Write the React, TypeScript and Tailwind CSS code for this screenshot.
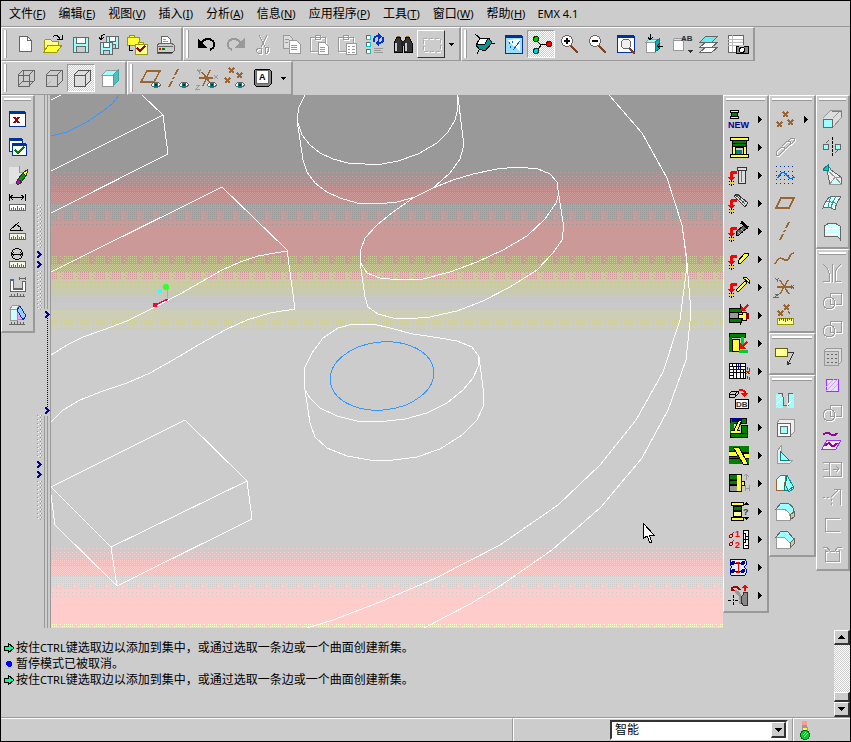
import type { ReactNode } from 'react';

const CY = '#99ffff';
const NV = '#003399';
const BR = '#996633';
const GR = '#999999';
const DK = '#666666';
const GN = '#008000';
const YE = '#ffff33';

const p = (d: string, stroke = '#000', fill = 'none', w = 1) => (
  <path d={d} stroke={stroke} fill={fill} strokeWidth={w} />
);
const r = (x: number, y: number, w: number, h: number, fill: string, stroke = 'none') => (
  <rect x={x} y={y} width={w} height={h} fill={fill} stroke={stroke} />
);
const emboss = (d: string) => (
  <>
    <path d={d} stroke="#fff" transform="translate(1 1)" />
    <path d={d} stroke={GR} />
  </>
);
const txt = (x: number, y: number, size: number, s: string, fill = '#000') => (
  <text x={x} y={y} fontSize={size} fontWeight="bold" fill={fill} fontFamily="Liberation Sans, sans-serif">{s}</text>
);
const eye = (
  <>
    {p('M12 19Q17 13 22 19Q17 24 12 19z', DK, '#fff')}
    {r(15, 17, 4, 4, '#008080')}
    {r(16, 18, 2, 2, '#003333')}
  </>
);
const cross = (x: number, y: number, c = BR) => p(`M${x - 2} ${y - 2}l5 5M${x + 3} ${y - 2}l-5 5`, c, 'none', 1.5);
const floppy = (x: number, y: number, s: number) => (
  <>
    {r(x, y, s, s, CY, DK)}
    {r(x + 3, y, s - 6, s / 2 - 1, '#fff', DK)}
    {r(x + 3, y + s / 2 + 2, s - 6, s / 2 - 2, '#ccc', DK)}
  </>
);
const place = (
  <>
    {p('M10 9H7Q4 9 4 12V15', '#f00', 'none', 3)}
    {p('M1 14h7l-3.500 4z', 'none', '#f00')}
    {p('M2 18l5 4M7 18l-5 4M4.500 17v6', '#000')}
    {r(3, 19, 3, 2, '#ffcc00')}
  </>
);
const ruler = (y: number, fill = '#fff') => (
  <>
    {r(4, y, 16, 6, fill, DK)}
    {p(`M6 ${y + 6}v-2M8 ${y + 6}v-3M10 ${y + 6}v-2M12 ${y + 6}v-4M14 ${y + 6}v-2M16 ${y + 6}v-3M18 ${y + 6}v-2`, DK)}
  </>
);
const cube = 'M5 9h11v11H5zM5 9l5-5h11v11l-5 5M16 9l5-5';
const lens = (
  <>
    {p('M14 14l7 7', '#804020', 'none', 2)}
    <circle cx="10" cy="9" r="5.500" fill="#fff" stroke={DK} />
  </>
);
const shapes = (
  <>
    {emboss('M10 4h11v11h-11z')}
    {emboss('M3 14a6 6 0 1 0 12 0a6 6 0 1 0 -12 0')}
  </>
);

const ic: Record<string, ReactNode> = {
  create: <>{p('M6 4h8l4 4v11H6z', DK, '#fff')}{p('M14 4v4h4', DK)}</>,
  open: (
    <>
      {p('M3 20V9l2-2h4l2 2h6v4', '#999900', '#ffff99')}
      {p('M3 20l4-7h14l-5 7z', '#999900', YE)}
      {p('M12 5q4-4 7 2M16 7h5V3')}
    </>
  ),
  save: floppy(4, 5, 15),
  saveCopy: <>{floppy(9, 4, 12)}{floppy(3, 10, 12)}{p('M8 3q-4-1-4 4M2 5l2 3l3-3')}</>,
  backup: (
    <>
      {r(2, 5, 12, 8, YE, '#999900')}{p('M4 5V3h5v2', '#999900', YE)}
      {p('M4 13v5h4')}
      {r(10, 12, 12, 10, '#ffff99', '#999900')}{p('M13 12v-2h5v2', '#999900', YE)}
      {p('M12 16l3 3l5-5', '#990000', 'none', 2)}
    </>
  ),
  print: (
    <>
      {p('M8 12V4h6l3 3v5z', DK, '#fff')}{p('M10 7h3M10 9h5M10 11h5', GR)}
      {p('M4 13l3-2h11l3 2v6l-2 2H4z', DK, '#ccc')}{p('M4 14h16', DK)}
      {r(6, 16, 2, 2, '#f00')}{r(9, 16, 3, 2, GN)}{p('M5 20h15', '#333')}
    </>
  ),
  undo: <>{p('M6 11q6-7 12-2q4 5-3 9', '#000', 'none', 2)}{p('M3 7v8h8z', '#000', '#000')}</>,
  redo: <>{p('M18 11q-6-7-12-2q-4 5 3 9', GR, 'none', 2)}{p('M21 7v8h-8z', GR, GR)}</>,
  cut: <>{emboss('M8 3l6 12M16 3l-6 12M7 16h3v5H7l-2-2zM14 15h3l1 3l-2 3h-2z')}</>,
  copy: <>{p('M4 3h6l3 3v10H4z', GR, '#ddd')}{p('M10 8h7l4 4v9H10z', GR, '#fff')}{p('M6 7h4M6 10h3M12 13h6M12 15h6M12 17h6', GR)}</>,
  paste: <>{emboss('M3 5h15v14H3zM8 5V3h5v4H8z')}{p('M11 10h6l4 4v8H11z', GR, '#fff')}{p('M13 15h5M13 17h5M13 19h5', GR)}</>,
  special: <>{emboss('M3 5h15v14H3zM8 5V3h5v4H8z')}{r(11, 11, 10, 11, '#fff', GR)}{p('M13 14h2M17 14h3M13 17h2M17 17h3M13 20h2M17 20h3', GR, 'none', 1)}</>,
  regen: (
    <>
      {[3, 10, 17].map((y) => <g key={y}>{r(3, y, 4, 4, '#fff', DK)}{p(`M7 ${y}v4h-4`, '#00cccc')}</g>)}
      {p('M11 10q-1-6 5-6M20 5q2 6-5 6', '#0033cc', 'none', 2)}
      {p('M15 1l4 3l-4 4zM16 8l-4 3l4 3z', 'none', '#0033cc')}
      {p('M11 16h9M11 18h7M11 20h9', GR)}
    </>
  ),
  find: (
    <>
      {p('M6 5h3l2 6v9H3v-9zM15 5h3l3 6v9h-8v-9z', '#000', '#333')}{r(10, 9, 4, 5, '#222')}
      {p('M5 11v8M15 11v8', '#ccc', 'none', 2)}{p('M6 4h3M15 4h3', '#996600')}
    </>
  ),
  select: <><path d="M4 6h17v13H4z" stroke="#fff" strokeDasharray="4 2" transform="translate(1 1)" /><path d="M4 6h17v13H4z" stroke="#aaa" strokeDasharray="4 2" /></>,
  spin: (
    <>
      {p('M2 2l6 5M15 11h7M7 16l-3 6')}
      {p('M3 13l4-7h9l3 5l-7 8l-6-2z', '#000', '#009999')}{p('M4 12l3-6h8l-3 6z', '#000', '#fff')}
    </>
  ),
  repaint: (
    <>
      {r(4, 4, 17, 17, '#99ddff', NV)}{r(4, 3, 17, 3, NV)}{p('M6 8l13 11V7z', 'none', '#fff')}
      {p('M12 18l7-9M8 10v2M11 9v2M9 14v2', '#0066cc')}
    </>
  ),
  center: (
    <>
      {p('M7 8l5 5l-4 6M12 12h8')}
      <circle cx="7" cy="7" r="2.500" fill="#00cc00" stroke="#030" /><circle cx="20" cy="12" r="2.500" fill="red" stroke="#600" />
      <circle cx="7" cy="19" r="2.500" fill="#00cccc" stroke="#033" />
    </>
  ),
  zoomIn: <>{lens}{p('M7 9h6M10 6v6', '#000', 'none', 2)}</>,
  zoomOut: <>{lens}{p('M7 9h6', '#000', 'none', 2)}</>,
  refit: (
    <>
      {r(4, 4, 17, 16, '#fff', NV)}{r(4, 3, 17, 3, NV)}{p('M16 16l6 6', '#804020', 'none', 2)}
      <circle cx="13" cy="12" r="5" fill="#eee" stroke={DK} />
    </>
  ),
  orient: (
    <>
      {p('M5 10l3-3h10l-3 3z', GR, CY)}{r(5, 10, 9, 10, '#fff', GR)}{p('M14 10l4-3v10l-4 3z', '#008080', '#00b3b3')}
      {p('M9 2v6M7 5l2 3l3-3M22 14h-6M19 11l-3 3l3 3')}
    </>
  ),
  views: <>{p('M4 8l2-2h9v3', GR, CY)}{r(4, 8, 10, 10, '#fff', GR)}{txt(12, 9, 8, 'AB', '#333')}{p('M18 18h6l-3 3z', 'none', '#333')}</>,
  layers: (
    <>
      {p('M3 20l6-5h12l-6 5z', DK, '#fff')}{p('M3 15l6-5h12l-6 5z', DK, '#fff')}{p('M3 10l6-6h12l-6 6z', DK, '#66eeee')}
    </>
  ),
  viewMgr: (
    <>
      {r(3, 3, 15, 17, '#fff', DK)}{p('M3 7h15M3 10h15M3 13h15M7 3v17', '#bbb')}
      {r(11, 14, 12, 7, '#888', '#000')}{r(14, 13, 5, 2, '#ccc')}<circle cx="17" cy="18" r="2.500" fill="#fff" stroke="#000" />
    </>
  ),
  wire: <>{p(cube, DK)}{p('M5 20l5-5h11M10 15V4', DK)}</>,
  hidden: <>{p(cube, DK)}{p('M6 19l4-4', '#aaa')}</>,
  noHidden: p(cube, '#555', '#ddd'),
  shaded: <>{p('M5 9l5-5h11l-5 5z', GR, CY)}{r(5, 9, 11, 11, '#fff', GR)}{p('M16 9l5-5v11l-5 5z', '#33aaaa', '#55bbbb')}</>,
  planeEye: <>{p('M2 16L8 5h13l-6 11z', BR, 'none', 1.5)}{eye}</>,
  axisEye: <>{p('M11 3l-3 6M7 11l-1 2M5 15l-3 6', BR, 'none', 1.5)}{eye}</>,
  csysEye: <>{p('M4 12h14M7 6l9 12M15 4L8 20', BR, 'none', 1.5)}{p('M2 3l2 3l2-3M4 6v2M1 19h4l-4 4h4M19 9l4 4M23 9l-4 4', GR)}{eye}</>,
  pointEye: <>{cross(8, 4)}{cross(4, 14)}{cross(16, 9)}{eye}</>,
  annot: <>{p('M5 3h13l2 2v13l-2 2H5l-2-2V5z', '#000', '#888')}{r(5, 4, 12, 13, '#fff', DK)}{txt(8, 14, 9, 'A')}</>,
  close: <>{r(4, 5, 16, 14, '#fff', NV)}{r(4, 4, 16, 3, NV)}{p('M9 10l5 6M14 10l-5 6', '#990000', 'none', 2)}</>,
  activate: (
    <>
      {r(4, 4, 13, 12, '#fff', NV)}{r(4, 3, 13, 3, NV)}{r(7, 9, 14, 11, '#fff', NV)}{r(7, 8, 14, 3, NV)}
      {p('M10 15l3 3l6-6', GN, 'none', 2)}
    </>
  ),
  erase: (
    <>
      {p('M3 3h11l6 6v3l-8 7l-4 2H3z', '#ccc', '#e2e2e2')}{p('M14 3v6h6', GR, '#ccc')}
      {p('M13 16l5-6l3 3l-5 6z', '#333', '#009900')}{p('M13 16l-2 4l2 2l4-3z', '#333', '#cc00cc')}{p('M18 10l4-3v3l-1 3z', '#333', YE)}
    </>
  ),
  dist: <>{p('M4 3v7M20 3v7M5 6h14M8 4L5 6l3 3M16 4l3 2l-3 3')}{ruler(13)}</>,
  angle: <>{p('M5 11L14 3M5 11h13M12 6q4 2 4 5')}{ruler(14, '#f5f5e5')}</>,
  diam: <><circle cx="12" cy="7" r="5.500" stroke="#000" />{p('M7 7h10M9 5L7 7l2 2M15 5l2 2l-2 2')}{ruler(14, '#f5f5e5')}</>,
  area: <>{p('M5 5h3v9h9V6h3v10H5z', '#3366cc', '#fff')}{p('M5 16V4h3v9h9V6h3', DK)}{p('M14 2v3M20 2v3M15 3h5M4 21h16M6 19v2M9 19v2M12 18v3M15 19v2M18 19v2', DK)}</>,
  section: (
    <>
      {p('M5 6l3-4h7l-3 4z', GR, '#eee')}{r(5, 6, 7, 11, '#ccffff', GR)}
      {p('M12 17V8l3-5l4 13z', GR, '#ff99ff')}{p('M12 7l3-4l6 10l-3 4z', NV, '#99ccff')}
      {p('M4 21h16M6 19v2M9 19v2M12 18v3M15 19v2M18 19v2', DK)}
    </>
  ),
  newMold: <>{r(3, 3, 8, 2, YE, '#000')}{r(4, 5, 6, 4, GN, '#000')}{r(3, 9, 8, 2, YE, '#000')}{txt(1, 21, 9, 'NEW', '#000099')}</>,
  mold: (
    <>
      {r(3, 2, 18, 3, YE, '#000')}{r(5, 5, 14, 6, GN, '#000')}{p('M5 8h14')}
      {r(5, 11, 14, 8, YE, '#000')}{r(8, 12, 8, 7, '#ccc', '#000')}{r(9, 15, 6, 4, '#008080')}{r(3, 19, 18, 3, YE, '#000')}
    </>
  ),
  bolt: <>{place}{p('M10 4h9v3h-9zM11 7h7v13h-7z', '#333', '#ddd')}{p('M14 8v11', '#777')}</>,
  spring: <>{place}{p('M7 5l3-2l11 9l-3 4z', '#333', '#ddd')}{p('M9 4l9 9M12 3l-4 4M15 6l-4 4M18 9l-4 4', '#555')}</>,
  screw: <>{place}{p('M9 17v-4l8-7l3 3l-8 7z', '#000', '#666')}{p('M14 3l7 6', '#000', 'none', 3)}{p('M11 13l3 3M14 10l3 3', '#ccc')}</>,
  pin: <>{place}{p('M11 14l7-8h3l1 2l-8 8l-2 1z', '#000', YE)}</>,
  ejector: <>{place}{p('M9 15L18 6l2 2l-9 9z', '#000', YE)}{p('M16 3l6 5v-3l-3-3z', '#000', YE)}</>,
  insert: (
    <>
      {r(2, 5, 12, 4, GN, '#000')}{r(2, 9, 9, 6, '#999', '#000')}{r(2, 15, 12, 4, GN, '#000')}{p('M13 1v4M13 19v3')}
      {p('M11 11h4v-2h4v8h-4v-2h-4z', '#000', YE)}{r(19, 10, 3, 6, '#990000')}{p('M21 2l-4 4', '#f00', 'none', 2)}{p('M14 3v5h5z', 'none', '#f00')}
    </>
  ),
  slider: (
    <>
      {r(2, 2, 16, 4, GN, '#000')}{r(2, 6, 3, 15, GN)}{r(5, 8, 7, 12, YE, '#000')}{r(14, 6, 3, 12, '#00cc33')}{r(12, 19, 9, 3, '#00cc33')}
      {p('M20 11l-4 4', '#f00', 'none', 2)}{p('M13 12v6h6z', 'none', '#f00')}
    </>
  ),
  grid: (
    <>
      {r(2, 4, 16, 15, '#fff', '#000')}{p('M5 4v3M9 4v15M13 4v15M16 10v9M2 7h16M2 13h16M2 16h5')}
      {p('M2 10h16M6 7v12M11 4v6', '#0000cc')}{p('M20 8v3M22 9v3M20 17v3M22 18v3', GN)}{p('M19 12l4 3M23 12l-4 3', '#f00')}
    </>
  ),
  db: (
    <>
      {p('M2 7l3-3h6v3l-3 3H2zM2 7h6v3M8 7l3-3', '#000', '#ccc')}{p('M12 3q6 0 6 3', '#f00', 'none', 2)}{p('M14 6h7l-3.500 4z', 'none', '#f00')}
      {r(8, 12, 13, 9, '#fff', '#000')}{txt(9, 20, 8, 'DB', '#333')}
    </>
  ),
  lever: (
    <>
      {r(3, 3, 16, 5, GN, '#000')}{r(3, 8, 4, 10, GN)}{r(14, 10, 6, 8, GN, '#000')}{r(3, 18, 17, 4, GN, '#000')}{r(5, 3, 10, 4, '#000099')}
      {p('M13 6L8 17M4 17h9', '#000', 'none', 4)}{p('M13 6L8 17M4 17h9', YE, 'none', 2)}
    </>
  ),
  cool: (
    <>
      {r(2, 3, 20, 18, GN)}{p('M2 9h20M2 15h20')}
      {p('M2 11h8M13 13h9', '#000', 'none', 6)}{p('M2 11h8M13 13h9', YE, 'none', 4)}
      {p('M6 4h6l9 17h-5z', '#000', YE)}
    </>
  ),
  clamp: (
    <>
      {r(2, 3, 9, 5, GN, '#000')}{r(2, 9, 9, 4, GN, '#000')}{r(2, 14, 9, 6, '#999', '#000')}
      {p('M10 3h4v17h-4', '#000', YE, 1)}{r(14, 10, 3, 4, YE, '#000')}{p('M19 9V3M17 5l2-2l3 3M18 14v6M22 14v6M18 17h4', GR)}
    </>
  ),
  info: (
    <>
      {r(4, 3, 12, 3, YE, '#000')}{r(6, 7, 8, 4, GN, '#000')}{r(6, 12, 8, 5, '#ffff99', '#000')}{r(4, 18, 12, 3, YE, '#000')}
      {txt(16, 16, 9, '?', '#333')}{p('M17 6h5l-2.500-3zM17 18h5l-2.500 3z', 'none', '#000')}
    </>
  ),
  list: (
    <>
      <circle cx="4" cy="9" r="1.500" stroke="#900" /><circle cx="4" cy="17" r="1.500" stroke="#900" />{p('M5 7l2-2M5 15l2-2', '#f00')}
      {txt(8, 10, 9, '1', '#f00')}{txt(8, 21, 9, '2', '#f00')}{r(16, 3, 5, 18, '#fff', '#000')}{p('M16 6h3M18 9h3M16 12h5M16 15h3M18 18h3M18 6v9')}
    </>
  ),
  plate: (
    <>
      {p('M4 4h14l1 2v4l-2 2l2 2v4l-1 2H4l-1-2v-4l2-2l-2-2V6z', '#000099', '#ddeeff')}
      {[6, 16].map((x) => [8, 16].map((y) => <circle key={`${x}-${y}`} cx={x} cy={y} r="1.500" fill="#0000cc" stroke="#000066" />))}
      {p('M6 8h10M6 16h10', '#0000cc')}{p('M11 7v10M9 7h4M9 17h4', '#f00')}
    </>
  ),
  gear: (
    <>
      {p('M4 6q5-5 9 1', '#aa0000', 'none', 2)}{p('M4 3v5h4z', 'none', '#aa0000')}{p('M8 8q7 3 6 13', GR, 'none', 3)}
      {p('M6 12v3M6 19v3M1 17h3M8 17h3M6 16v2')}{p('M20 9h-4v3l-2 2v5l2 3h4z', '#333', '#888')}
      {p('M15 5h6l-3-4z', 'none', '#f00')}{p('M18 4v4', '#f00', 'none', 2)}
    </>
  ),
  points: <>{cross(12, 7)}{cross(6, 17)}{cross(17, 15)}</>,
  chain: emboss('M3 17l5-5h3v3l-5 5H3zM9 11l5-5h3v3l-5 5M15 6l3-3h3v3l-4 4'),
  sketch: (
    <>
      {[3, 8, 12, 16, 20].map((y) => <path key={y} d={`M3 ${y}h18`} stroke={NV} strokeDasharray="1 3" />)}
      {p('M5 15q4-9 8-4q4 7 8 3', '#0077ee', 'none', 1.5)}
    </>
  ),
  plane: p('M3 17L8 7h13l-5 10z', BR, 'none', 1.5),
  axis: p('M16 3l-3 6M12 11l-1 2M10 15l-3 6', BR, 'none', 1.5),
  curve: p('M2 17q4-8 8-5q4 3 6-1q2-5 5-5', BR, 'none', 1.5),
  csys: <>{p('M4 12h14M7 5l9 14M15 5L7 19', BR, 'none', 1.5)}{p('M2 3l2 2l2-2M4 5v2M2 19h4l-4 3h4M18 10l3 4M21 10l-3 4', DK)}</>,
  pointRuler: <>{cross(13, 4)}{cross(7, 10)}{p('M15 8l2 3', BR)}{r(4, 15, 16, 6, '#ffff99', '#999900')}{p('M6 15v3M8 15v2M10 15v3M12 15v4M14 15v3M16 15v2M18 15v3', '#666600')}</>,
  note: <>{r(2, 3, 12, 8, '#ffff99', '#666600')}{p('M15 7h6l-6 12M14 16v4l4-2', '#333')}</>,
  hole: (
    <>
      {p('M3 7h5l2 3v11H3zM21 7h-5l-2 3v11h7z', 'none', CY)}
      {p('M5 6h4l1 4v8h5v-8l1-4h4', DK)}{p('M3 18l7-8M3 12l5-5M14 19l7-8', '#fff')}
    </>
  ),
  shell: <>{p('M4 8l3-4h14v13l-4 4H4z', GR, '#eee')}{r(4, 8, 13, 13, '#fff', DK)}{r(7, 11, 7, 7, CY, DK)}</>,
  rib: <>{p('M4 20V8l4-5v10l4 4h8l-4 4z', GR, '#eee')}{p('M7 8v9h9z', '#008080', CY)}</>,
  draft: <>{p('M8 4h6l7 13l-5 4z', '#009999', CY)}{p('M3 19V9l5-5h5l-2 15z', BR, '#e0ffff')}{p('M11 19h5l5-4M11 19l3-14', '#008080')}</>,
  round: <>{p('M3 10l5-6h5q8 2 8 9l-4 4q-1-6-8-7z', DK, CY)}{p('M3 10h6q7 1 8 7v4H3z', GR, '#fff')}{p('M17 16l4-3v5l-4 3z', DK, '#cccc99')}</>,
  chamfer: <>{p('M3 10l5-6h6l7 8l-4 4l-6-6z', DK, CY)}{p('M3 10h8l6 6v5H3z', GR, '#fff')}{p('M17 16l4-4v5l-4 4z', DK, '#cccc99')}</>,
  extrude: <>{p('M3 11l8-8h10v8l-8 9', GR, '#ddd')}{r(3, 12, 9, 8, CY, DK)}{p('M13 11l8-8', GR)}{p('M12 4h9v6', '#339999')}</>,
  revolve: <><circle cx="6" cy="12" r="3" fill={CY} stroke={DK} /><circle cx="18" cy="12" r="3" fill={CY} stroke={DK} />{p('M6 8l3-3M18 15l-3 3', DK)}<path d="M12 2v20" stroke="#000" strokeDasharray="3 1" /></>,
  blend: <>{p('M3 6l5-4l3 5l10 7v7H10l-3-13z', DK, '#eee')}{p('M3 7l5-5v6z', '#008080', '#00cccc')}{p('M10 21l5-7l6 7z', GR, '#ccffff')}{p('M8 8l7 6l6 0', GR)}</>,
  variable: <>{p('M3 17q2-8 8-12l10 1q-5 5-6 13q-6-4-12-2z', DK, '#dff')}{p('M6 11q7-1 11 2M11 5q-2 6-3 12M16 5q-4 6-5 12', '#339999')}</>,
  fill: <>{p('M4 7q8-6 16 0v13q-2-3-6-3t-9 1z', DK, '#ccffff')}{p('M6 9h12M6 12h12M6 15h12', '#fff')}</>,
  mirror: <>{emboss('M3 3q5 4 6 9v8H3M21 3q-5 4-6 9v8h6M12 3v18')}</>,
  merge: shapes,
  pattern: <>{p('M4 6l3-3h14v14l-3 3', GR, '#ddd')}{r(4, 6, 14, 14, '#ccc', GR)}{[9, 13, 17].map((y) => <path key={y} d={`M7 ${y}h10`} stroke={DK} strokeDasharray="2 2" />)}</>,
  hatch: <>{r(6, 6, 12, 12, '#e8ddff', '#9933ff')}{p('M6 14l8-8M6 18L18 6M11 18l7-7', '#ccaaff')}</>,
  wrap: <>{p('M3 6q4-4 7-1q4 3 7-1', '#990099', 'none', 2)}{p('M2 20l5-9h14l-5 9z', '#9933ff', '#eee')}{p('M5 17q4-5 6-1q3 3 6-2', '#990099', 'none', 2)}</>,
  extend: emboss('M3 5h18v14H3M3 12h5M9 5v14M13 12h5M16 9l3 3l-3 3'),
  corner: emboss('M3 12h2M7 12h2M11 12l8-8M14 4h6v16M11 14v2M11 18v2M15 4h5v5'),
  bend: emboss('M20 5H5v13h15'),
  pocket: emboss('M5 9v11h14V9M3 6h4l3 4h5l3-4h4M5 10h3M16 10h3'),
};

function Icon({ name }: { name: string }) {
  return (
    <svg width="24" height="24" viewBox="0 0 24 24" fill="none" shapeRendering="crispEdges" aria-hidden="true" className="shrink-0">
      {ic[name]}
    </svg>
  );
}

type Look = 'flat' | 'sunk' | 'raised';

function ToolButton({ name, look = 'flat' }: { name: string; look?: Look }) {
  const style =
    look === 'sunk'
      ? 'border-t-[#999] border-l-[#999] border-r-white border-b-white bg-[repeating-conic-gradient(#fff_0_25%,#ccc_0_50%)] bg-[length:2px_2px]'
      : look === 'raised'
        ? 'border-t-white border-l-white border-r-[#333] border-b-[#333]'
        : 'border-transparent';
  return (
    <button type="button" aria-label={name} className={`flex size-7 shrink-0 items-center justify-center border ${style}`}>
      <Icon name={name} />
    </button>
  );
}

function Caret() {
  return (
    <button type="button" aria-label="more" className="flex h-7 w-3 items-center justify-center">
      <svg width="5" height="3" viewBox="0 0 5 3" shapeRendering="crispEdges"><path d="M0 0h5L2.500 3z" /></svg>
    </button>
  );
}

function Bar({ names, active, raised, caret }: { names: string[]; active?: string; raised?: string; caret?: boolean }) {
  return (
    <div role="toolbar" className="flex h-[34px] items-center border-t border-r-2 border-b border-l border-t-white border-r-[#999] border-b-[#999] border-l-white pr-[2px]">
      <span className="mr-1 ml-[2px] h-7 w-[3px] border-r border-l-2 border-r-[#999] border-l-white" />
      {names.map((n) => (
        <ToolButton key={n} name={n} look={n === active ? 'sunk' : n === raised ? 'raised' : 'flat'} />
      ))}
      {caret && <Caret />}
    </div>
  );
}

function Panel({ names, flyouts = [] }: { names: string[]; flyouts?: string[] }) {
  return (
    <div role="toolbar" className="flex flex-col border-t border-r-2 border-b-2 border-l border-t-white border-r-[#999] border-b-[#999] border-l-white pb-[2px]">
      <span className="mx-[2px] mt-[2px] mb-1 h-[3px] border-t-2 border-b border-t-white border-b-[#999]" />
      {names.map((n, i) => (
        <div key={`${n}${i}`} className="flex items-center pl-px">
          <ToolButton name={n} />
          {flyouts.includes(n) && (
            <button type="button" aria-label={`${n} more`} className="flex h-7 w-[13px] items-center justify-center">
              <svg width="4" height="7" viewBox="0 0 4 7" shapeRendering="crispEdges"><path d="M0 0l4 3.500L0 7z" /></svg>
            </button>
          )}
        </div>
      ))}
    </div>
  );
}

const menus: [string, string][] = [
  ['文件', 'F'], ['编辑', 'E'], ['视图', 'V'], ['插入', 'I'], ['分析', 'A'], ['信息', 'N'],
  ['应用程序', 'P'], ['工具', 'T'], ['窗口', 'W'], ['帮助', 'H'],
];

const moldTools = ['newMold', 'mold', 'bolt', 'spring', 'screw', 'pin', 'ejector', 'insert', 'slider', 'grid', 'db', 'lever', 'cool', 'clamp', 'info', 'list', 'plate', 'gear'];

function Chevron() {
  return (
    <svg width="5" height="7" viewBox="0 0 5 7" fill="none" stroke="#0000aa" strokeWidth="2" shapeRendering="crispEdges">
      <path d="M0 0l4 3.500L0 7" />
    </svg>
  );
}

function Grip() {
  return (
    <button type="button" aria-label="pane" className="flex h-[105px] w-[5px] flex-col items-center justify-between">
      <svg width="5" height="43" shapeRendering="crispEdges">
        <defs>
          <pattern id="knurl" width="4" height="4" patternUnits="userSpaceOnUse">
            <path d="M0 0h1v1H0zM3 2h1v1H3z" fill="#999" /><path d="M1 1h1v1H1zM4 3h1v1H4zM3 0h1v1H3z" fill="#fff" />
          </pattern>
        </defs>
        <rect width="5" height="43" fill="url(#knurl)" />
      </svg>
      <Chevron />
      <Chevron />
      <svg width="5" height="39" shapeRendering="crispEdges"><rect width="5" height="39" fill="url(#knurl)" /></svg>
    </button>
  );
}

const dots: Record<string, string> = {
  d1: 'M0 0h1v1H0z',
  d2: 'M0 0h1v1H0zM2 2h1v1H2z',
  d3: 'M0 0h1v1H0zM2 0h1v1H2zM0 2h1v1H0zM2 2h1v1H2z',
  d4: 'M0 0h1v1H0zM2 0h1v1H2zM1 1h1v1H1zM3 1h1v1H3zM0 2h1v1H0zM2 2h1v1H2zM1 3h1v1H1zM3 3h1v1H3z',
  // clusters of dots with sparse gaps between them
  clump: 'M0 0h1v1H0zM2 0h1v1H2zM4 0h1v1H4zM6 0h1v1H6zM8 0h1v1H8zM12 0h1v1H12zM0 2h1v1H0zM2 2h1v1H2zM4 2h1v1H4zM6 2h1v1H6zM8 2h1v1H8zM14 2h1v1H14z',
};
const GREY = '#999999', ROSE = '#cc9999', OLIVE = '#cccc99', LIGHT = '#cccccc', PINK = '#ffcccc';
// top, height, ground colour, dot colour, dot density
const bands: [number, number, string, string, string][] = [
  [172, 5, GREY, ROSE, 'd1'], [177, 8, GREY, ROSE, 'd2'], [185, 8, GREY, ROSE, 'd3'], [193, 11, GREY, ROSE, 'd4'],
  [204, 8, ROSE, GREY, 'd3'], [212, 8, ROSE, GREY, 'clump'], [220, 8, ROSE, GREY, 'd1'],
  [228, 28, ROSE, ROSE, 'd1'],
  [256, 8, ROSE, OLIVE, 'clump'], [264, 8, ROSE, OLIVE, 'd4'], [272, 8, OLIVE, ROSE, 'clump'],
  [280, 8, OLIVE, LIGHT, 'd1'], [288, 8, OLIVE, LIGHT, 'd2'], [296, 7, OLIVE, LIGHT, 'd3'], [303, 7, OLIVE, LIGHT, 'd4'],
  [310, 10, LIGHT, OLIVE, 'd2'], [320, 6, LIGHT, OLIVE, 'clump'], [326, 5, LIGHT, OLIVE, 'd1'],
  [331, 215, LIGHT, LIGHT, 'd1'],
  [546, 6, LIGHT, PINK, 'd1'], [552, 8, LIGHT, PINK, 'd2'], [560, 6, LIGHT, PINK, 'd3'], [566, 10, LIGHT, PINK, 'd4'],
  [576, 8, PINK, LIGHT, 'd3'], [584, 4, PINK, LIGHT, 'clump'], [588, 11, PINK, LIGHT, 'd1'],
  [599, 24, PINK, PINK, 'd1'], [623, 1, PINK, PINK, 'd1'], [624, 4, PINK, '#ffffcc', 'clump'],
];

function Viewport() {
  return (
    <svg className="min-w-0 flex-1 self-stretch" viewBox="51 95 672 533" preserveAspectRatio="xMinYMin slice" shapeRendering="crispEdges" fill="none" role="img" aria-label="model">
      <rect x="51" y="95" width="672" height="78" fill={GREY} />
      {bands.map(([y, h, ground, dot, den], i) => (
        <g key={y}>
          <pattern id={`band${i}`} width={den === 'clump' ? 16 : 4} height="4" patternUnits="userSpaceOnUse"><path d={dots[den]} fill={dot} /></pattern>
          <rect x="51" y={y} width="672" height={h} fill={ground} />
          {ground !== dot && <rect x="51" y={y} width="672" height={h} fill={`url(#band${i})`} />}
        </g>
      ))}
      <g stroke="#fff">
        <path d="M51 100L61 95M142 95L163 115L51 171M163 115L168 154L51 213M51 272L222 187L287 250L295 309" />
        <path d="M51 355L67 345L83 337L103 330L127 321L153 308L180 294L222 270L240 262L258 256L275 253L287 251M51 422L63 410L80 400L103 391L127 383L150 373L173 360L200 344L227 329L247 320L270 313L295 309" />
        <path d="M51 487L185 420L247 481L252 519L117 586L111 547L247 481M51 487L111 547M51 495L55 525L117 586" />
        <path d="M305 95L299 107L297 120L302 135L310 145L320 153L333 159L348 163L365 164L382 164L398 161L418 154L437 143L448 132L455 120L458 108L457 95" />
        <path d="M297 120L303 160L307 172L315 183L327 192L340 198L357 203L377 204L397 202L415 197L433 188L450 173L460 159L463 148L463 138L458 97" />
        <path d="M558 190L557 182L550 174L538 169L517 167L497 169L473 174L453 180L433 188L413 198L393 212L377 225L365 238L360 252L360 262L367 273L380 278L400 280L423 279L450 272L477 262L503 250L527 236L545 219L556 203L559 193" />
        <path d="M360 262L365 297L368 307L378 314L393 318L407 319L430 317L457 311L483 301L510 287L537 270L553 253L562 240L563 232L563 222L558 190" />
        <path d="M305 390L304 380L305 367L312 353L323 338L338 328L353 324L373 324L390 328L413 334L440 338L457 341L472 347L478 355L479 365L473 378L463 390L447 403L427 413L405 419L378 422L357 421L337 416L320 408L310 398L305 390L310 423L315 437L327 448L347 456L370 460L393 460L417 457L440 449L462 435L477 420L483 407L484 395L479 357" />
        <path d="M609 95L642 133L667 178L682 225L686 253L686 273L680 320L663 372L636 420L600 465L558 505L500 545L436 578L380 602L333 620L307 628" />
        <path d="M682 225L687 263L691 312L686 360L668 410L642 458L601 507L552 550L500 586L470 604L424 628" />
      </g>
      <g stroke="#3399ff">
        <path d="M51 136L67 132L87 122L103 111L113 103L119 95" />
        <ellipse cx="382" cy="376" rx="52" ry="34" transform="rotate(-6 382 376)" />
      </g>
      <path d="M168 299L155 305" stroke="#ff0033" strokeWidth="1.500" />
      <path d="M168 299L167 288" stroke="#33ff33" />
      <path d="M168 299L160 291" stroke="#33ffff" />
      <circle cx="155" cy="305" r="2.500" fill="#ff0033" />
      <circle cx="166" cy="287" r="3" fill="#33ff33" />
      <circle cx="160" cy="291" r="2" fill="#33ffff" />
      <path d="M643 523v16l4-3l3 7l2-1l-3-7h5z" fill="#fff" stroke="#000" />
    </svg>
  );
}

function Prompt({ children, info }: { children: ReactNode; info?: boolean }) {
  return (
    <li className="flex h-4 items-center">
      <svg width="13" height="12" viewBox="0 0 13 12" shapeRendering="crispEdges" className="shrink-0">
        {info ? <path d="M4 3h3l2 2v2l-2 2H5L3 7V5z" fill="#0000ff" /> : <path d="M1 4h4V1l6 5l-6 5V8H1z" fill="#00ff99" stroke="#000" />}
      </svg>
      <span>{children}</span>
    </li>
  );
}

const latin = 'text-[11px]';

function ScrollButton({ up }: { up?: boolean }) {
  return (
    <button type="button" aria-label={up ? 'up' : 'down'} className="flex h-[15px] w-4 items-center justify-center border border-t-white border-r-2 border-r-[#333] border-b-2 border-b-[#333] border-l-white bg-[#ccc]">
      <svg width="7" height="4" viewBox="0 0 7 4" shapeRendering="crispEdges"><path d={up ? 'M0 4h7L3.500 0z' : 'M0 0h7L3.500 4z'} /></svg>
    </button>
  );
}

export default function App() {
  return (
    <div className="flex min-h-screen flex-col border border-black bg-[#ccc] font-['Noto_Sans','Noto_Sans_CJK_SC',sans-serif] text-[12px] leading-4 text-black">
      <nav className="flex h-[26px] items-center border-b border-[#999] pl-px">
        {menus.map(([label, key]) => (
          <button key={key} type="button" className="flex items-center pr-[6px] pl-[7px] whitespace-nowrap">
            {label}
            <span className={latin}>(<u>{key}</u>)</span>
          </button>
        ))}
        <button type="button" className={`px-[6px] whitespace-nowrap ${latin}`}>EMX 4.1</button>
      </nav>
      <div className="flex">
        <Bar names={['create', 'open', 'save', 'saveCopy', 'backup', 'print']} />
        <Bar names={['undo', 'redo', 'cut', 'copy', 'paste', 'special', 'regen', 'find', 'select']} raised="select" caret />
        <Bar names={['spin', 'repaint', 'center', 'zoomIn', 'zoomOut', 'refit', 'orient', 'views', 'layers', 'viewMgr']} active="center" />
      </div>
      <div className="flex">
        <Bar names={['wire', 'hidden', 'noHidden', 'shaded']} active="noHidden" />
        <Bar names={['planeEye', 'axisEye', 'csysEye', 'pointEye', 'annot']} caret />
      </div>

      <main className="flex flex-1">
        <div className="w-[34px] shrink-0">
          <Panel names={['close', 'activate', 'erase', 'dist', 'angle', 'diam', 'area', 'section']} />
        </div>
        <div className="flex w-[9px] shrink-0 flex-col gap-[105px] pt-[110px] pl-[2px]">
          <Grip />
          <Grip />
        </div>
        <div className="flex w-[7px] shrink-0 flex-col border-r border-[#999]">
          <span className="h-[214px] w-1 border-x border-[#999]" />
          <button type="button" aria-label="sash" className="flex h-[107px] flex-col items-center justify-between py-[2px]">
            <Chevron />
            <span className="w-0 flex-1 border-r border-dotted border-[#0000aa]" />
            <Chevron />
          </button>
          <span className="w-1 flex-1 border-x border-[#999]" />
        </div>
        <Viewport />
        <div className="w-[46px] shrink-0"><Panel names={moldTools} flyouts={moldTools} /></div>
        <div className="w-[47px] shrink-0">
          <Panel names={['points', 'chain', 'sketch', 'plane', 'axis', 'curve', 'csys', 'pointRuler']} flyouts={['points']} />
          <Panel names={['note']} />
          <Panel names={['hole', 'shell', 'rib', 'draft', 'round', 'chamfer']} />
        </div>
        <div className="w-[34px] shrink-0">
          <Panel names={['extrude', 'revolve', 'blend', 'variable', 'fill']} />
          <Panel names={['mirror', 'merge', 'merge', 'pattern', 'hatch', 'merge', 'wrap', 'extend', 'corner', 'bend', 'pocket']} />
        </div>
      </main>

      <section className="flex h-[89px] shrink-0 items-stretch justify-between">
        <ul className="pt-3 pl-[2px]">
          <Prompt>按住<span className={latin}>CTRL</span>键选取边以添加到集中，或通过选取一条边或一个曲面创建新集。</Prompt>
          <Prompt info>暂停模式已被取消。</Prompt>
          <Prompt>按住<span className={latin}>CTRL</span>键选取边以添加到集中，或通过选取一条边或一个曲面创建新集。</Prompt>
        </ul>
        <div className="mt-[2px] flex w-4 flex-col bg-[repeating-conic-gradient(#fff_0_25%,#ccc_0_50%)] bg-[length:2px_2px]">
          <ScrollButton up />
          <span className="flex-1" />
          <span className="h-[10px] border border-t-white border-r-2 border-r-[#333] border-b-2 border-b-[#333] border-l-white bg-[#ccc]" />
          <ScrollButton />
        </div>
      </section>

      <footer className="flex h-6 shrink-0 items-stretch justify-end border-t border-[#999]">
        <span className="flex-1 border-t border-r border-t-white border-r-[#999]" />
        <div className="flex w-[280px] items-center justify-end border-t border-r border-l border-t-white border-r-[#999] border-l-white pr-1">
          <div className="relative flex h-5 w-[178px] border-2 border-t-[#333] border-r-white border-b-white border-l-[#333] bg-white">
            <select aria-label="filter" className="w-full appearance-none bg-white pl-[3px] outline-none">
              <option>智能</option>
            </select>
            <span className="pointer-events-none absolute top-0 right-0 bottom-0 flex w-[15px] items-center justify-center border border-t-white border-r-2 border-r-[#333] border-b-2 border-b-[#333] border-l-white bg-[#ccc]">
              <svg width="7" height="4" viewBox="0 0 7 4" shapeRendering="crispEdges"><path d="M0 0h7L3.500 4z" /></svg>
            </span>
          </div>
        </div>
        <div className="flex w-[57px] items-center border-t border-l border-white pl-[5px]">
          <svg width="12" height="20" viewBox="0 0 12 20" shapeRendering="crispEdges" role="img" aria-label="status">
            <rect x="3" y="1" width="5" height="4" fill="#ff9999" /><rect x="3" y="5" width="5" height="2" fill="#999" />
            <rect x="3" y="7" width="5" height="4" fill="#ffff00" stroke="#999" />
            <circle cx="6" cy="15" r="4.500" fill="#00cc33" stroke="#006600" /><path d="M4 15l3-3M5 17l4-4" stroke="#99ff99" />
          </svg>
        </div>
      </footer>
    </div>
  );
}
